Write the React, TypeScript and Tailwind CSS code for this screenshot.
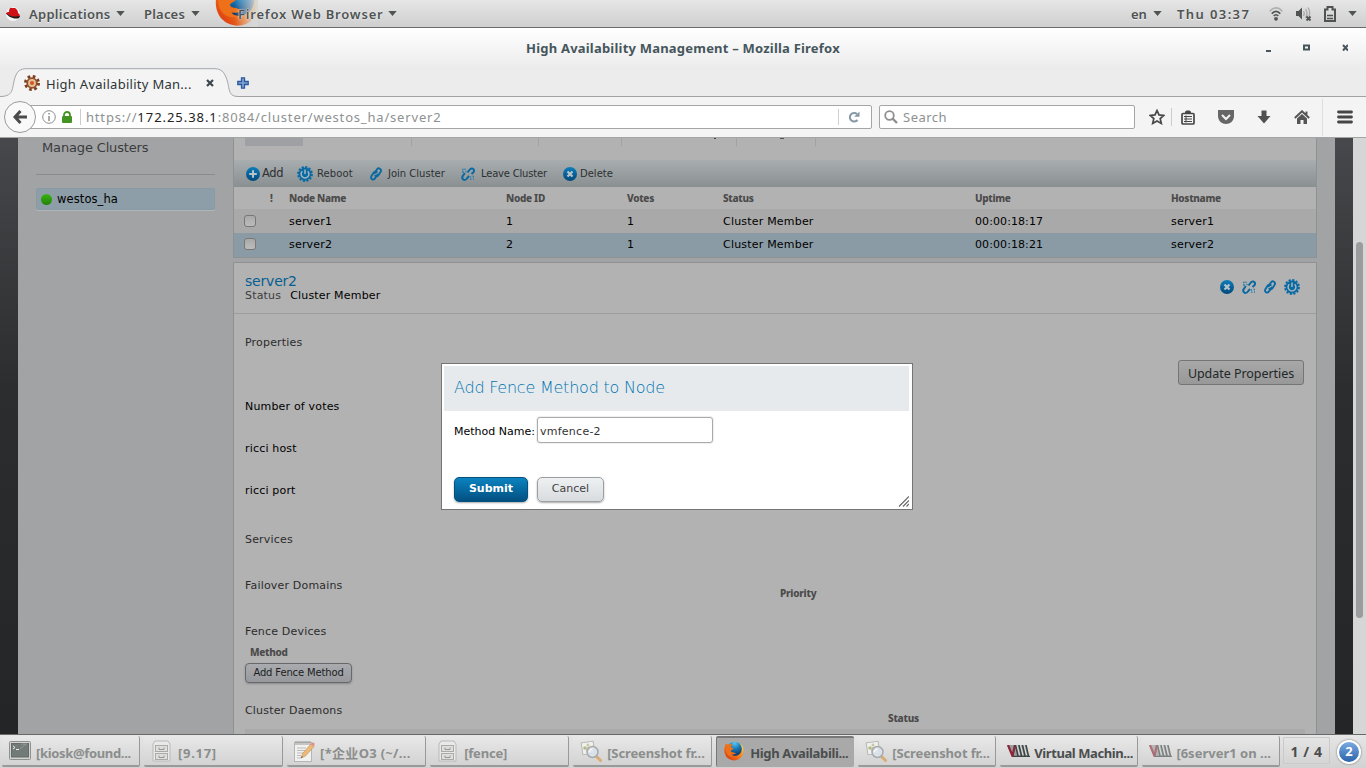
import React from "react";

const Firefox = ({ className }: { className: string }) => (
  <svg viewBox="0 0 32 32" className={className}>
    <defs>
      <radialGradient id="ffGlobe" cx="0.5" cy="0.1" r="0.95">
        <stop offset="0" stopColor="#5cc8ee" />
        <stop offset="0.45" stopColor="#1678b8" />
        <stop offset="1" stopColor="#0a2a5c" />
      </radialGradient>
      <linearGradient id="ffFlame" x1="1" y1="0.1" x2="0.15" y2="0.8">
        <stop offset="0" stopColor="#ffe14a" />
        <stop offset="0.35" stopColor="#f9921e" />
        <stop offset="1" stopColor="#df4412" />
      </linearGradient>
    </defs>
    <path d="M3 5C-2 13 0 30 16 31c11 0 16-9 15-18-.5-4-2-6-4-8z" fill="url(#ffFlame)" />
    <circle cx="17" cy="12.500" r="11.500" fill="url(#ffGlobe)" />
    <path
      d="M3 4c1 1.500 2 2.300 3.500 2.200C9 4 12 4.500 14 5.500c-2 1-2.800 2.500-3 4 .5 1.500 3.500 1 4 2.500 0 2-3.500 2-4 3.500 0 2 1.500 2.500 3.500 2.500 2 .3 3 1.500 4.500 1.200-1.500 2.800-5 2.800-7 2 2 3.800 9 4 12.500-1.200C19 27 6 27 3 17 2 13 2 8 3 4z"
      fill="#ee711a"
    />
  </svg>
);

const Caret = () => (
  <svg viewBox="0 0 10 6" className="h-[5px] w-[9px] shrink-0">
    <path d="M0 0h10L5 6z" fill="#4f5353" />
  </svg>
);

const BlueDefs = () => (
  <defs>
    <linearGradient id="blue" x1="0" y1="0" x2="0" y2="1">
      <stop offset="0" stopColor="#0d7dba" />
      <stop offset="1" stopColor="#02497a" />
    </linearGradient>
  </defs>
);

const AddIcon = () => (
  <svg viewBox="0 0 14 14" className="size-[14px] shrink-0">
    <BlueDefs />
    <circle cx="7" cy="7" r="7" fill="url(#blue)" />
    <path d="M7 3.200v7.600M3.200 7h7.600" stroke="#b8c4cb" strokeWidth="2" />
  </svg>
);

const DeleteIcon = () => (
  <svg viewBox="0 0 14 14" className="size-[14px] shrink-0">
    <BlueDefs />
    <circle cx="7" cy="7" r="7" fill="url(#blue)" />
    <path d="M4.500 4.500l5 5M9.500 4.500l-5 5" stroke="#b8c4cb" strokeWidth="2.200" />
  </svg>
);

const RebootIcon = () => (
  <svg viewBox="0 0 16 16" className="size-[16px] shrink-0">
    <circle cx="8" cy="8" r="7" fill="none" stroke="#0869a3" strokeWidth="1.800" strokeDasharray="2.200 1.465" />
    <circle cx="8" cy="8" r="6.400" fill="#0869a3" />
    <path d="M5.300 5.200a3.900 3.900 0 1 0 5.400 0M8 3.400V8" fill="none" stroke="#a9b6bd" strokeWidth="1.500" />
  </svg>
);

const LinkIcon = () => (
  <svg viewBox="0 0 12 14" className="h-[14px] w-[12px] shrink-0">
    <g fill="none" stroke="#0869a3" strokeWidth="1.900" strokeLinecap="round">
      <path d="M4.700 6.200l2-3.400c.8-1.300 2-1.800 3.200-1.100 1.200.7 1.300 2 .6 3.200L8.400 8.200C7.600 9.400 6.300 9.500 5.300 8.800" />
      <path d="M7.300 7.600l-2 3.500c-.8 1.300-2 1.800-3.200 1.100-1.200-.7-1.300-2-.6-3.200l2.100-3.300c.8-1.200 2.100-1.300 3.100-.6" />
    </g>
  </svg>
);

const UnlinkIcon = () => (
  <svg viewBox="0 0 14 14" className="size-[14px] shrink-0">
    <g fill="none" stroke="#0869a3" strokeWidth="2">
      <path d="M6.500 5.500l2.300-3c1-1.300 2.700-1.400 3.600-.4.9 1 .7 2.300 0 3.100L10.500 7" />
      <path d="M3.800 6L2 8.700c-1 1.300-.9 2.800.2 3.700 1 .8 2.500.6 3.300-.4L8 9" />
    </g>
    <path d="M1 2.500h1.600M4 1.500v1.600M1 5h2M4.500 4l1 1M9 9.500l1 1M11.500 9.500H13M9.800 11.500V13M12 12h1" stroke="#2f7fa9" strokeWidth="1.300" />
  </svg>
);

const toolbar = [
  { label: "Add", icon: <AddIcon />, box: "w-[51px] gap-[2px] text-[11.500px] tracking-[-0.350px]" },
  { label: "Reboot", icon: <RebootIcon />, box: "w-[73px] gap-[4px] text-[10px] tracking-[0.1px]" },
  { label: "Join Cluster", icon: <LinkIcon />, box: "w-[91px] gap-[6px] text-[10px] tracking-[0px]" },
  { label: "Leave Cluster", icon: <UnlinkIcon />, box: "w-[102px] gap-[6px] text-[10px] tracking-[-0.200px]" },
  { label: "Delete", icon: <DeleteIcon />, box: "gap-[3px] text-[10px] tracking-[0px]" },
];

const COLS = "grid grid-cols-[36px_19px_217px_121px_96px_252px_196px_1fr] items-center";

const nodes = [
  { name: "server1", id: "1", uptime: "00:00:18:17", row: "h-[24px] bg-[#a9a9a9]" },
  { name: "server2", id: "2", uptime: "00:00:18:21", row: "h-[24px] pb-[2px] bg-[#8b9ba5]" },
];

const Terminal = () => (
  <svg viewBox="0 0 22 20" className="h-[20px] w-[22px] shrink-0">
    <rect x=".5" y=".5" width="21" height="18" rx="1" fill="#d2d4d1" stroke="#8e918d" />
    <rect x="2.500" y="2.500" width="17" height="13.500" fill="#727b77" stroke="#656b68" />
    <path d="M4 5l2 1.500L4 8M7 8.500h3" stroke="#eee" fill="none" />
    <path d="M11 8l6-5M12 3h6" stroke="#939b98" />
  </svg>
);
const Cabinet = () => (
  <svg viewBox="0 0 20 22" className="h-[22px] w-[20px] shrink-0">
    <path d="M3 1h13l2 3v17H1V4z" fill="#e9e9e7" stroke="#b9bab7" />
    <g fill="#dededc" stroke="#aaaba8">
      <rect x="3.500" y="5.500" width="12" height="6" />
      <rect x="3.500" y="13.500" width="12" height="6" />
      <path d="M7 7.500v2h5v-2M7 15.500v2h5v-2" fill="none" stroke="#969795" />
    </g>
  </svg>
);
const Notepad = () => (
  <svg viewBox="0 0 22 22" className="size-[22px] shrink-0">
    <rect x="1.500" y="2.500" width="17" height="19" fill="#f1f1ef" stroke="#b5b6b2" />
    <path d="M3 1v4M5 1v4M7 1v4M9 1v4M11 1v4M13 1v4M15 1v4M17 1v4" stroke="#999b97" />
    <path d="M4 8h9M4 10.500h8M4 13h7M4 15.500h4M4 18h4" stroke="#bbb" />
    <path d="M8 18l2-5 8-9 3 2.500-8.500 9.500z" fill="#eeb877" stroke="#b8905f" strokeWidth=".6" />
    <path d="M18 4l1.500-1.500c1.500-.5 2.500.8 2 2.300L21 6.500z" fill="#e78d8d" />
    <path d="M8 18l.8-2 1.200 1.200z" fill="#555" />
  </svg>
);
const Viewer = () => (
  <svg viewBox="0 0 22 22" className="size-[22px] shrink-0">
    <rect x="2" y="2" width="12" height="12" fill="#f0f0ee" stroke="#b5b8b0" transform="rotate(-8 8 8)" />
    <circle cx="5" cy="8" r="1.800" fill="#a8bf90" />
    <circle cx="8" cy="5" r="1.500" fill="#c7ca9b" />
    <circle cx="8" cy="9" r="2" fill="#e6bf8c" />
    <path d="M16 16l4.500 4.500" stroke="#d9ac73" strokeWidth="3" strokeLinecap="round" />
    <circle cx="12.500" cy="12" r="5.500" fill="#dce2ea" fillOpacity=".9" stroke="#a6a9ad" strokeWidth="1.500" />
    <path d="M9.500 12a3 3 0 0 1 3-3" stroke="#fff" fill="none" />
  </svg>
);
const Vmm = ({ className }: { className: string }) => (
  <svg viewBox="0 0 23 12" className={className}>
    <path d="M0 0h19l3 12H5z" fill="#9a9e9e" />
    <path d="M1 0l4.500 11L8 0" stroke="#8d2638" strokeWidth="2.200" fill="none" />
    <path d="M8.500 0l2.500 11M12 0l2.500 11M15.500 0L18 11M19 0l2.500 11M6 11.400h17" stroke="#3e4545" strokeWidth="1.500" fill="none" />
    <path d="M10 0l2.500 10M13.500 0L16 10M17 0l2.500 10" stroke="#e6e6e6" strokeWidth=".9" fill="none" />
  </svg>
);

const tasks = [
  { text: "[kiosk@found...", icon: <Terminal />, box: "w-[138px] pl-[7px] gap-[5px]", t: "tracking-[-0.340px]", on: "" },
  { text: "[9.17]", icon: <Cabinet />, box: "w-[139px] pl-[8px] gap-[6px]", t: "tracking-[0.7px]", on: "" },
  { text: "[*企业O3 (~/...", icon: <Notepad />, box: "w-[139px] pl-[6px] gap-[5px]", t: "tracking-[0.3px]", on: "" },
  { text: "[fence]", icon: <Cabinet />, box: "w-[139px] pl-[8px] gap-[6px]", t: "tracking-[-0.200px]", on: "" },
  { text: "[Screenshot fr...", icon: <Viewer />, box: "w-[139px] pl-[7px] gap-[5px]", t: "tracking-[-0.120px]", on: "" },
  { text: "High Availabili...", icon: <Firefox className="size-[20px] shrink-0" />, box: "w-[138px] pl-[7px] gap-[6px]", t: "tracking-[-0.350px]", on: "active" },
  { text: "[Screenshot fr...", icon: <Viewer />, box: "w-[138px] pl-[7px] gap-[5px]", t: "tracking-[-0.120px]", on: "" },
  { text: "Virtual Machin...", icon: <Vmm className="h-[12px] w-[23px] shrink-0" />, box: "w-[138px] pl-[7px] gap-[4px]", t: "tracking-[-0.420px]", on: "dark" },
  { text: "[6server1 on ...", icon: <Vmm className="h-[12px] w-[23px] shrink-0 opacity-60" />, box: "w-[138px] pl-[7px] gap-[4px]", t: "tracking-[0px]", on: "" },
];

const TopBar = () => (
  <header className="flex h-[28px] items-center border-b border-[#6b6b6b] bg-linear-to-b from-[#e6e6e6] to-[#cfcfcf] text-[13px] font-semibold text-[#4f5353] [text-shadow:0_1px_0_#eee]">
    <svg viewBox="0 0 16 16" className="ml-[5px] size-[16px]">
      <circle cx="8" cy="8" r="7" fill="#f4f4f4" />
      <path d="M1 7c1-1 2-1 3-1 0-3 1-5 3-4l3 0c2 1 3 3 3 5 2 1 2.500 3 1 4-4 1-8 0-10-2-2 0-3-1-3-2z" fill="#d01217" />
      <path d="M1.500 7c3 3 7 4 10 3.500l3.500-.5c-.5 3-2.500 2.500-5 2.500C6 12 2.500 10 1.500 7z" fill="#1a1a1a" />
    </svg>
    <span className="ml-[8px] w-[81px] pt-[2px] whitespace-nowrap tracking-[0.28px]">Applications</span>
    <span className="ml-[6px] flex"><Caret /></span>
    <span className="ml-[19px] w-[42px] pt-[2px] whitespace-nowrap tracking-[0.2px]">Places</span>
    <span className="ml-[5px] flex"><Caret /></span>
    <div className="relative ml-[15px] h-[27px] w-[43px] overflow-hidden">
      <Firefox className="absolute -top-[17px] left-0 size-[44px]" />
      <div className="absolute inset-0 bg-linear-to-r from-transparent from-45% to-[#d8d8d8] to-100%" />
    </div>
    <span className="relative -ml-[20px] w-[144px] pt-[2px] whitespace-nowrap tracking-[0.8px] [text-shadow:0_0_2px_#eee,0_0_1px_#eee]">Firefox Web Browser</span>
    <span className="ml-[6px] flex"><Caret /></span>
    <span className="ml-auto w-[16px] pt-[2px]">en</span>
    <span className="ml-[6px] flex"><Caret /></span>
    <span className="ml-[15px] w-[74px] pt-[2px] whitespace-nowrap tracking-[1.400px]">Thu 03:37</span>
    <svg viewBox="0 0 14 14" className="ml-[18px] size-[14px]">
      <g fill="none" strokeWidth="1.700">
        <path d="M.8 4.500C4-.3 10-.3 13.200 4.500" stroke="#b0b0b0" />
        <path d="M2.800 6.800c2.300-3.200 6.100-3.200 8.400 0M4.800 9c1.200-1.700 3.200-1.700 4.400 0" stroke="#4f5353" />
      </g>
      <circle cx="7" cy="11.800" r="1.900" fill="#4f5353" />
    </svg>
    <svg viewBox="0 0 18 16" className="ml-[12px] h-[16px] w-[18px]">
      <path d="M1 5h2.500L7 1.500v12L3.500 10H1z" fill="#4f5353" />
      <path d="M8.500 5c1 1.500 1 3.500 0 5M10.500 3c2 3 2 6 0 9M13 1.500c2 3 2 6 1 9" fill="none" stroke="#aaa" strokeWidth="1.300" />
      <path d="M11.500 10.500l4 4M15.500 10.500l-4 4" stroke="#4f5353" strokeWidth="1.800" />
    </svg>
    <svg viewBox="0 0 12 16" className="ml-[11px] h-[16px] w-[12px]">
      <path d="M1 3.500h2.500V1h5v2.500H11V15H1z" fill="none" stroke="#4f5353" strokeWidth="2" />
      <path d="M3 12.500h6M3 9.500h6" stroke="#4f5353" strokeWidth="1.500" />
    </svg>
    <span className="mr-[9px] ml-[12px] flex"><Caret /></span>
  </header>
);

const BrowserChrome = () => (
  <>
    <div className="flex h-[40px] items-center bg-linear-to-b from-[#ffffff] to-[#ececec] text-[13px] font-bold text-[#46565c]">
      <span className="ml-[526px] w-[318px] pt-[2px] whitespace-nowrap tracking-[0.210px]">High Availability Management – Mozilla Firefox</span>
      <svg viewBox="0 0 82 10" className="ml-auto h-[10px] w-[82px]">
        <path d="M0 7h5v2H0z" fill="#46565c" />
        <path d="M38 2.500h5v4h-5z" stroke="#46565c" strokeWidth="2" fill="none" />
        <path d="M77 2l5 5.500M82 2l-5 5.500" stroke="#46565c" strokeWidth="2" />
      </svg>
      <span className="w-[18px]" />
    </div>
    <div className="relative flex h-[29px] items-start border-b border-[#a2a2a2] bg-[#ececec]">
      <svg viewBox="0 0 240 29" className="absolute top-0 left-0 h-[29px] w-[240px]">
        <path d="M0 28.500C16 28.500 11 18 16 7Q18.500.7 26 .7H215Q222 .7 225 7C231 18 226 28.500 238 28.500V29H0z" fill="#f4f4f4" />
        <path d="M0 28.500C16 28.500 11 18 16 7Q18.500.7 26 .7H215Q222 .7 225 7C231 18 226 28.500 238 28.500" fill="none" stroke="#a4a8ad" />
      </svg>
      <div className="relative flex h-[30px] items-center pl-[24px] text-[13px] text-[#2e3436]">
        <svg viewBox="0 0 16 16" className="size-[16px]">
          <circle cx="8" cy="8" r="6.500" fill="none" stroke="#7c3f20" strokeWidth="3" strokeDasharray="2.600 2.500" />
          <circle cx="8" cy="8" r="4.800" fill="#e5c09a" stroke="#94502a" strokeWidth="1.800" />
          <circle cx="8" cy="8" r="2" fill="#d2571e" />
        </svg>
        <span className="ml-[6px] w-[146px] pt-[3px] whitespace-nowrap tracking-[0.280px]">High Availability Man...</span>
        <svg viewBox="0 0 8 8" className="ml-[14px] size-[8px]"><path d="M1 1l6 6M7 1L1 7" stroke="#3b474c" strokeWidth="2.200" /></svg>
        <svg viewBox="0 0 12 12" className="ml-[23px] size-[12px]"><path d="M4.500.8h3v3.700h3.700v3H7.500v3.700h-3V7.500H.8v-3h3.700z" fill="#7ea3d6" stroke="#2b5a9c" strokeWidth="1.300" /></svg>
      </div>
    </div>
    <div className="flex h-[41px] items-center border-b border-[#a4a4a4] bg-[#f4f4f4] text-[13px] text-[#8d9191]">
      <div className="relative z-10 ml-[4px] flex size-[32px] items-center justify-center rounded-full border border-[#9b9b9b] bg-[#f9f9f9]">
        <svg viewBox="0 0 14 14" className="size-[14px]"><path d="M7.500 1L2 7l5.500 6M2 7h12" fill="none" stroke="#4b4b4b" strokeWidth="3" /></svg>
      </div>
      <div className="-ml-[8px] flex h-[24px] w-[844px] items-center rounded-r-[2px] border border-[#a5a5a5] bg-white pl-[13px]">
        <svg viewBox="0 0 14 14" className="size-[14px]">
          <circle cx="7" cy="7" r="6.300" fill="none" stroke="#8d8d8d" />
          <path d="M7 3v1.600M7 6v5" stroke="#8d8d8d" strokeWidth="1.500" />
        </svg>
        <svg viewBox="0 0 10 12" className="ml-[6px] h-[12px] w-[10px]">
          <path d="M2 6V4a3 3 0 0 1 6 0v2" fill="none" stroke="#449423" strokeWidth="1.800" />
          <rect y="5" width="10" height="7" rx="1" fill="#449423" />
        </svg>
        <span className="ml-[8px] h-[16px] w-px bg-[#ccc]" />
        <span className="ml-[5px] pt-[2px] whitespace-nowrap tracking-[0.820px]">https://<span className="tracking-[0.950px] text-[#222]">172.25.38.1</span>:8084/cluster/westos_ha/server2</span>
        <span className="ml-auto h-[16px] w-px bg-[#d0d0d0]" />
        <svg viewBox="0 0 12 12" className="mr-[11px] ml-[9px] size-[12px]">
          <path d="M9.500 9A4.300 4.300 0 1 1 9 3" fill="none" stroke="#8798a5" strokeWidth="2" />
          <path d="M11.500.5v5.300H6.200z" fill="#8798a5" />
        </svg>
      </div>
      <div className="ml-[7px] flex h-[24px] w-[256px] items-center rounded-[2px] border border-[#a5a5a5] bg-white pl-[4px]">
        <svg viewBox="0 0 14 14" className="size-[14px]"><circle cx="5.500" cy="5.500" r="4.300" fill="none" stroke="#8f8f8f" strokeWidth="1.800" /><path d="M8.500 8.500L13 13" stroke="#8f8f8f" strokeWidth="2.400" /></svg>
        <span className="ml-[5px] pt-[2px] tracking-[0.5px]">Search</span>
      </div>
      <svg viewBox="0 0 16 16" className="ml-[14px] size-[16px]"><path d="M8 1.500l2 4.400 4.800.5-3.600 3.200 1.100 4.800L8 12l-4.300 2.400 1.100-4.800L1.200 6.400 6 5.900z" fill="none" stroke="#474747" strokeWidth="1.700" /></svg>
      <span className="ml-[6px] h-[18px] w-px bg-[#ccc]" />
      <svg viewBox="0 0 14 15" className="ml-[9px] h-[15px] w-[14px]">
        <rect x="1" y="3.500" width="12" height="10.500" rx="1" fill="none" stroke="#474747" strokeWidth="1.700" />
        <path d="M4 3V1.800L5.500.6h3L10 1.800V3z" fill="#474747" />
        <path d="M3 6.500h8M3 9h8M3 11.500h8M5 5.500v7" stroke="#474747" />
      </svg>
      <svg viewBox="0 0 16 14" className="ml-[23px] h-[14px] w-[16px]"><path d="M0 0h16v6c0 5-4 8-8 8s-8-3-8-8z" fill="#666" /><path d="M4 5l4 4 4-4" fill="none" stroke="#f4f4f4" strokeWidth="2" /></svg>
      <svg viewBox="0 0 14 14" className="ml-[23px] size-[14px]"><path d="M4.500.5h5v5.500h4L7 13.500.5 6h4z" fill="#505050" /></svg>
      <svg viewBox="0 0 16 15" className="ml-[23px] h-[15px] w-[16px]"><path d="M.8 8L8 1.300 15.200 8M12.500 1.500v3" fill="none" stroke="#555" strokeWidth="2" /><path d="M3 8.500l5-4.600 5 4.600V14H9.500v-4h-3v4H3z" fill="#555" /></svg>
      <span className="ml-[12px] h-[37px] w-px bg-[#dedede]" />
      <svg viewBox="0 0 16 14" className="ml-[14px] h-[14px] w-[16px]"><path d="M1.500 2h13M1.500 7h13M1.500 12h13" stroke="#454545" strokeWidth="2.800" strokeLinecap="round" /></svg>
    </div>
  </>
);

const Sidebar = () => (
  <aside className="flex w-[215px] shrink-0 flex-col bg-[#a2a3a5] px-[18px]">
    <div className="flex h-[37px] items-start border-b border-[#8a8b8e] pt-[1px] pl-[6px] text-[13px] leading-[18px] text-[#3a3b3d]">
      <span className="tracking-[-0.150px]">Manage Clusters</span>
    </div>
    <div className="mt-[13px] flex h-[22px] items-center rounded-[2px] border border-[#879ba7] bg-[#8d9ea8] pl-[4px] text-[11.500px] text-black shadow-[0_1px_0_#b4b5b7]">
      <span className="size-[11px] rounded-full bg-linear-to-b from-[#39b410] to-[#23820a]" />
      <span className="ml-[5px] pt-[2px] tracking-[0.100px]">westos_ha</span>
    </div>
  </aside>
);

const NodeTable = () => (
  <section className="h-[120px] border-x border-b border-[#8e9295] bg-[#b2b2b2]">
    <div className="flex h-[22px] items-start pl-[11px]">
      <span className="h-[8px] w-[58px] bg-[#9fa0a3]" />
      <span className="ml-[108px] h-[8px] w-px bg-[#a3a3a3]" />
      <span className="ml-[126px] h-[8px] w-px bg-[#a3a3a3]" />
      <span className="ml-[82px] h-[8px] w-px bg-[#a3a3a3]" />
      <span className="ml-[92px] h-px w-[2px] bg-[#444]" />
      <span className="ml-[20px] h-[8px] w-px bg-[#a3a3a3]" />
      <span className="ml-[43px] h-px w-[4px] bg-[#555]" />
      <span className="ml-[31px] h-[8px] w-px bg-[#a3a3a3]" />
    </div>
    <div className="flex h-[27px] items-center bg-linear-to-b from-[#a8adb0] to-[#8a9091] pl-[12px] text-[#2d3032]">
      {toolbar.map((t) => (
        <div key={t.label} className={"flex shrink-0 items-center whitespace-nowrap " + t.box}>
          {t.icon}
          <span>{t.label}</span>
        </div>
      ))}
    </div>
    <div className={COLS + " h-[22px] font-['Noto_Sans'] text-[10px] font-extrabold tracking-[-0.300px] text-[#4a4a4a]"}>
      <span />
      <span>!</span>
      <span>Node Name</span>
      <span>Node ID</span>
      <span>Votes</span>
      <span>Status</span>
      <span>Uptime</span>
      <span>Hostname</span>
    </div>
    {nodes.map((n) => (
      <div key={n.name} className={COLS + " text-[11px] tracking-[0.200px] text-black [&>span:not(:first-child)]:pt-[3px] " + n.row}>
        <span className="ml-[10px] size-[12px] rounded-[3px] border border-[#777] bg-linear-to-b from-[#a9a9a9] to-[#bcbcbc]" />
        <span />
        <span>{n.name}</span>
        <span>{n.id}</span>
        <span>1</span>
        <span>Cluster Member</span>
        <span className="tracking-[0.090px]">{n.uptime}</span>
        <span>{n.name}</span>
      </div>
    ))}
  </section>
);

const Details = () => (
  <section className="mt-[4px] flex min-h-0 flex-1 flex-col border-x border-t border-[#8e9295] bg-[#b2b2b2] text-[11px] tracking-[0.180px] text-[#2c2c2c]">
    <div className="flex h-[51px] shrink-0 items-start border-b border-[#9c9c9c] pl-[11px]">
      <div className="flex flex-col pt-[10px]">
        <span className="text-[14px] leading-[16px] tracking-[-0.2px] text-[#075f91]">server2</span>
        <span className="leading-[13px] text-[#3c3c3c]">Status<span className="ml-[9px] text-black">Cluster Member</span></span>
      </div>
      <div className="mt-[16px] mr-[16px] ml-auto flex items-center gap-[8px]">
        <DeleteIcon />
        <UnlinkIcon />
        <LinkIcon />
        <RebootIcon />
      </div>
    </div>
    <div className="flex h-[46px] shrink-0 items-start pt-[21px] pl-[11px] leading-[15px]">Properties</div>
    <div className="flex h-[26px] shrink-0 justify-end pr-[12px]">
      <button className="h-[25px] w-[126px] rounded-[3px] border border-[#757575] bg-linear-to-b from-[#a8a8a8] to-[#989898] pt-[3px] font-['Noto_Sans'] text-[12.500px] leading-[20px] tracking-[-0.050px] whitespace-nowrap text-[#222728]">Update Properties</button>
    </div>
    <div className="flex flex-col pt-[14px] pl-[11px] leading-[14px]">
      <span className="h-[42px] text-black">Number of votes</span>
      <span className="h-[42px] text-black">ricci host</span>
      <span className="h-[49px] text-black">ricci port</span>
      <span className="h-[46px]">Services</span>
      <div className="flex h-[46px]">
        <span className="w-[535px]">Failover Domains</span>
        <span className="mt-[7px] font-['Noto_Sans'] text-[10px] font-extrabold tracking-[-0.250px] text-[#4a4a4a]">Priority</span>
      </div>
      <span className="h-[21px]">Fence Devices</span>
      <span className="h-[17px] pl-[5px] font-['Noto_Sans'] text-[10px] leading-[13px] font-extrabold tracking-[-0.300px] text-[#4a4a4a]">Method</span>
      <button className="flex h-[20px] w-[107px] items-center justify-center rounded-[4px] border border-[#66686b] bg-linear-to-b from-[#a9abae] to-[#97999c] text-[10px] tracking-[-0.15px] whitespace-nowrap text-[#1b1d1f] shadow-[0_1px_2px_#888]">Add Fence Method</button>
      <div className="mt-[21px] flex h-[25px]">
        <span className="w-[643px]">Cluster Daemons</span>
        <span className="mt-[8px] font-['Noto_Sans'] text-[10px] leading-[13px] font-extrabold tracking-[-0.250px] text-[#4a4a4a]">Status</span>
      </div>
      <span className="mr-[11px] h-[6px] bg-[#a9a9a9]" />
    </div>
  </section>
);

const Dialog = () => (
  <div className="absolute top-[363px] left-[441px] h-[147px] w-[472px] border border-[#757575] bg-white py-[2px] pr-[3px] pl-[2px] text-[11px] text-black">
    <div className="flex h-[45px] items-center bg-[#e6eaed] pb-[2px] pl-[10px] text-[16px] text-[#0073ae]">
      <span className="font-extralight tracking-[-0.220px] whitespace-nowrap">Add Fence Method to Node</span>
    </div>
    <div className="mt-[5px] flex h-[28px] items-center pl-[10px]">
      <span className="w-[83px] pt-[5px] whitespace-nowrap">Method Name:</span>
      <div className="flex h-[26px] w-[176px] items-center rounded-[3px] border border-[#aaa] bg-white pt-[5px] pl-[2px] tracking-[0.250px] text-[#333] shadow-[0_0_0_1px_#f0f0f0]">vmfence-2</div>
    </div>
    <div className="mt-[33px] flex gap-[9px] pl-[10px]">
      <button className="h-[25px] w-[74px] rounded-[5px] border border-[#04517f] bg-linear-to-b from-[#0c83c0] to-[#035081] pb-[1px] font-bold text-white shadow-[0_1px_2px_#aaa]">Submit</button>
      <button className="h-[25px] w-[67px] rounded-[5px] border border-[#9b9fa2] bg-linear-to-b from-[#eef1f2] to-[#d8dcdf] pb-[1px] text-[#404040] shadow-[0_1px_2px_#aaa]">Cancel</button>
    </div>
    <svg viewBox="0 0 11 11" className="absolute right-[3px] bottom-[2px] size-[11px]"><path d="M1 10.500L11 .5M5 10.500l6-6M8.500 10.500L11 8" stroke="#666" strokeWidth="1.200" /></svg>
  </div>
);

const TaskBar = () => (
  <footer className="flex h-[34px] shrink-0 items-start border-t border-[#696969] bg-linear-to-b from-[#e6e6e6] to-[#d2d2d2] pt-px pl-[2px] text-[13px] font-bold">
    <div className="flex gap-[4.050px]">
      {tasks.map((t, i) => (
        <div
          key={i}
          className={
            "flex h-[31px] shrink-0 items-center rounded-[2px] whitespace-nowrap " +
            (t.on === "active"
              ? "border-t-2 border-l border-[#777] bg-[#a9a9a9] pb-[3px] text-[#4b4e4e] "
              : t.on === "dark"
                ? "border-r border-b-2 border-[#999] bg-linear-to-b from-[#e8e8e8] to-[#d3d3d3] text-[#4b4e4e] "
                : "border-r border-b-2 border-[#999] bg-linear-to-b from-[#e8e8e8] to-[#d3d3d3] text-[#8b8e8c] ") +
            t.box
          }
        >
          {t.icon}
          <span className={"pt-[6px] " + t.t}>{t.text}</span>
        </div>
      ))}
    </div>
    <div className="mt-px ml-auto flex h-[27px] w-[47px] items-center justify-center self-start rounded-[1px] border border-[#cacaca] pt-[2px] text-[14px] tracking-[0.6px] whitespace-nowrap text-[#4b4e4e]">1 / 4</div>
    <div className="mt-[4px] mr-[5px] ml-[7px] flex size-[24px] items-center justify-center rounded-full border-2 border-white bg-linear-to-b from-[#7baae0] to-[#2b63ab] text-[13px] text-white shadow-[0_0_2px_#555]">2</div>
  </footer>
);

export default function App() {
  return (
    <div className="relative flex h-[768px] w-[1366px] flex-col overflow-hidden font-['Noto_Sans','Noto_Sans_CJK_SC',sans-serif]">
      <TopBar />
      <BrowserChrome />
      <main className="flex h-[596px] shrink-0 overflow-hidden font-['DejaVu_Sans',sans-serif]">
        <div className="w-[18px] bg-linear-to-b from-[#47484b] via-[#2c2d2f] via-42% to-[#242526]" />
        <Sidebar />
        <div className="flex w-[1084px] shrink-0 flex-col overflow-hidden bg-[#a2a3a5]">
          <NodeTable />
          <Details />
        </div>
        <div className="w-[18px] bg-[#a2a3a5]" />
        <div className="w-[18px] bg-linear-to-b from-[#47484b] via-[#2c2d2f] via-42% to-[#242526]" />
        <div className="flex w-[13px] justify-center bg-[#d6d6d6]">
          <div className="mt-[104px] h-[376px] w-[7px] rounded-full bg-[#9b9c9d]" />
        </div>
      </main>
      <TaskBar />
      <div className="font-['DejaVu_Sans',sans-serif]">
        <Dialog />
      </div>
    </div>
  );
}
